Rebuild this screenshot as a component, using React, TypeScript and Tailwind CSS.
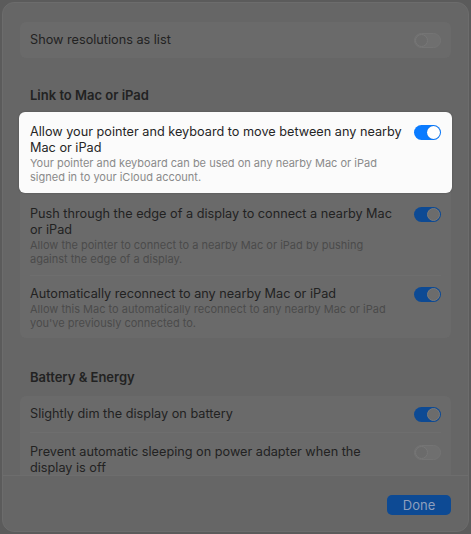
import React from "react";

const font = { fontFamily: "Inter, 'Noto Sans', sans-serif" };

function Toggle({ on, variant }: { on: boolean; variant: "dim" | "bright" }) {
  if (variant === "bright") {
    return (
      <div className="w-[27px] h-[15px] rounded-full bg-[#0a7bff] relative shrink-0 mt-[1px]">
        <div className="absolute right-[1px] top-[1px] w-[13px] h-[13px] rounded-full bg-white shadow-[0_0_1px_rgba(0,0,0,0.3)]" />
      </div>
    );
  }
  if (on) {
    return (
      <div className="w-[27px] h-[15px] rounded-full bg-[#0d4a94] relative shrink-0 mt-[1px]">
        <div className="absolute right-[1px] top-[1px] w-[13px] h-[13px] rounded-full bg-[#6c6c6c] border border-[#7a7a7a]" />
      </div>
    );
  }
  return (
    <div className="w-[27px] h-[15px] rounded-full bg-[#6f6f6f] border border-[#747474] relative shrink-0 mt-[1px]">
      <div className="absolute left-0 top-0 w-[13px] h-[13px] rounded-full bg-[#6b6b6b] border border-[#777777]" />
    </div>
  );
}

export default function App() {
  return (
    <div className="w-[471px] h-[534px] bg-[#5b5b5b] p-[2px]" style={font}>
      <div className="h-[530px] rounded-[12px] bg-[#666666] flex flex-col overflow-hidden border border-[#6c6c6c]">
        <div className="h-[472px] shrink-0 overflow-hidden px-[17px] pt-[19px]">
          {/* Group 1 */}
          <div className="rounded-[6px] bg-[#6a6a6a] h-[36px] px-[10px] flex items-center justify-between">
            <span className="text-[12.7px] text-[#222222]">Show resolutions as list</span>
            <Toggle on={false} variant="dim" />
          </div>

          <div className="mt-[29px] px-[10px] text-[13px] leading-[16px] font-semibold text-[#222222]">
            Link to Mac or iPad
          </div>

          {/* Group 2 */}
          <div className="mt-[9px] rounded-[6px] bg-[#6a6a6a] flex flex-col relative">
            <div className="-mx-[1px] rounded-[6px] bg-[#fbfbfb] px-[11px] pt-[12px] pb-[9px] flex justify-between shadow-[0_0_2px_rgba(0,0,0,0.25)]">
              <div className="flex flex-col">
                <div className="text-[12.7px] leading-[16px] text-[#262626]">
                  Allow your pointer and keyboard to move between any nearby
                  <br />
                  Mac or iPad
                </div>
                <div className="text-[11px] leading-[14px] text-[#8a8a8a]">
                  Your pointer and keyboard can be used on any nearby Mac or iPad
                  <br />
                  signed in to your iCloud account.
                </div>
              </div>
              <Toggle on variant="bright" />
            </div>
            <div className="px-[10px] pt-[13px] pb-[9px] flex justify-between">
              <div className="flex flex-col">
                <div className="text-[12.7px] leading-[16px] text-[#222222]">
                  Push through the edge of a display to connect a nearby Mac
                  <br />
                  or iPad
                </div>
                <div className="text-[11px] leading-[14px] text-[#4b4b4b]">
                  Allow the pointer to connect to a nearby Mac or iPad by pushing
                  <br />
                  against the edge of a display.
                </div>
              </div>
              <Toggle on variant="dim" />
            </div>
            <div className="mx-[10px] h-px bg-[#6e6e6e]" />
            <div className="px-[10px] pt-[10px] pb-[8px] flex justify-between">
              <div className="flex flex-col">
                <div className="text-[12.7px] leading-[16px] text-[#222222]">
                  Automatically reconnect to any nearby Mac or iPad
                </div>
                <div className="text-[11px] leading-[14px] text-[#4b4b4b]">
                  Allow this Mac to automatically reconnect to any nearby Mac or iPad
                  <br />
                  you've previously connected to.
                </div>
              </div>
              <Toggle on variant="dim" />
            </div>
          </div>

          <div className="mt-[31px] px-[10px] text-[13px] leading-[16px] font-semibold text-[#222222]">
            Battery &amp; Energy
          </div>

          {/* Group 3 */}
          <div className="mt-[11px] rounded-[6px] bg-[#6a6a6a] flex flex-col">
            <div className="h-[36px] px-[10px] flex items-center justify-between">
              <span className="text-[12.7px] text-[#222222]">Slightly dim the display on battery</span>
              <Toggle on variant="dim" />
            </div>
            <div className="mx-[10px] h-px bg-[#6e6e6e]" />
            <div className="px-[10px] pt-[11px] pb-[10px] flex justify-between">
              <div className="text-[12.7px] leading-[16px] text-[#222222]">
                Prevent automatic sleeping on power adapter when the
                <br />
                display is off
              </div>
              <Toggle on={false} variant="dim" />
            </div>
          </div>
        </div>
        <div className="flex-1 border-t border-[#6d6d6d] flex justify-end items-start pt-[19px] pr-[17px]">
          <button className="w-[64px] h-[20px] rounded-[5px] bg-[#0d4a94] text-[13px] leading-[20px] text-[#8d9fbd]">
            Done
          </button>
        </div>
      </div>
    </div>
  );
}
